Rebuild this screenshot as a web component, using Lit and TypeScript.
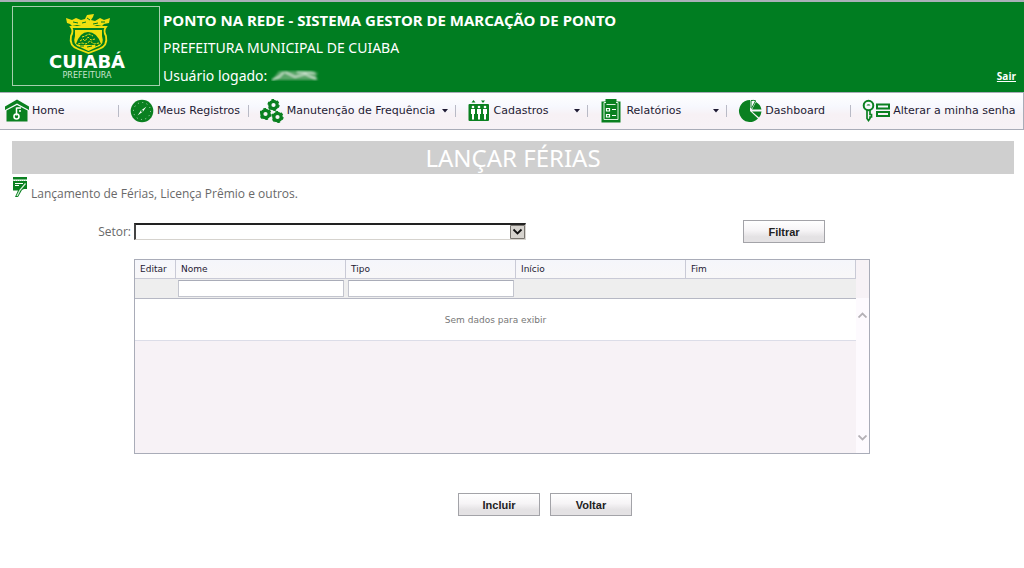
import { LitElement, html, svg, css } from "lit";
import { customElement, property } from "lit/decorators.js";

const icons: Record<string, unknown> = {
  home: svg`
    <path d="M0 7.500 12 0.500l12 7v3.500L12 4.500 0 11z" fill="#0a8020"/>
    <path d="M1.500 11.500 12 6l10.500 5.500V22.500h-21z" fill="#0a8020"/>
    <path d="M11.500 9h4.500M11.500 8.500v8M14 12h2" stroke="#fff" stroke-width="1.500" fill="none"/>
    <circle cx="11.500" cy="17.500" r="2.500" fill="none" stroke="#fff" stroke-width="1.600"/>`,
  clock: svg`
    <circle cx="12" cy="12" r="11.300" fill="#0a8020"/>
    <circle cx="12" cy="12" r="8.500" fill="none" stroke="#b8dfc0" stroke-width="1" stroke-dasharray="1 3.450"/>
    <path d="M7.500 16.500 11 11.500 16.500 7.500 13 12.500z" fill="#fff"/>
    <circle cx="12" cy="12" r="1" fill="#0a8020"/>`,
  gears: svg`
    <g fill="none" stroke="#0a8020" stroke-width="3.200">
      <circle cx="13.500" cy="6" r="3.700"/><circle cx="5.500" cy="15" r="3.700"/><circle cx="17.500" cy="18" r="3.700"/>
    </g>
    <g fill="none" stroke="#0a8020" stroke-width="1.400" stroke-dasharray="2.800 2.860">
      <circle cx="13.500" cy="6" r="5.400"/><circle cx="5.500" cy="15" r="5.400"/><circle cx="17.500" cy="18" r="5.400"/>
    </g>`,
  people: svg`
    <path d="M4.500 3.500 6.500 1l2 2.500zM14 1.500h4l-2 2.500z" fill="#0a8020"/>
    <rect x="1.500" y="5" width="20.500" height="17" rx="1" fill="#0a8020"/>
    <g fill="#fff">
      <circle cx="6" cy="8" r="1.300"/><circle cx="12" cy="8" r="1.300"/><circle cx="18" cy="8" r="1.300"/>
      <path d="M4 10h4v5h-1v5.500h-2V15H4zM10 10h4v5h-1v5.500h-2V15h-1zM16 10h4v5h-1v5.500h-2V15h-1z"/>
    </g>`,
  report: svg`
    <path d="M2.500 2.500h4V0h11v2.500h4V23.500h-19z" fill="#0a8020"/>
    <path d="M7 3.500H5v17h14v-17h-2M7.500 5.500h9" fill="none" stroke="#d9f0dd" stroke-width="1"/>
    <path d="M7.500 9.500h3v2.500h-3zM7.500 15.500h3V18h-3zM13 10.500h4M13 16.500h4" fill="none" stroke="#fff" stroke-width="1.200"/>`,
  pie: svg`
    <path d="M12 12V1a11 11 0 1 0 8 18.500z" fill="#0a8020"/>
    <path d="M14 10.500 18 3a11 11 0 0 1 5.500 7.500z" fill="#0a8020"/>
    <path d="M14 12.500h9.500a11 11 0 0 1-2.500 6z" fill="#0a8020"/>
    <path d="M13 9V1.500q3-.500 5 .500M13.500 9.500 17.500 2" fill="none" stroke="#0a8020"/>`,
  key: svg`
    <circle cx="6.500" cy="6.500" r="4.800" fill="none" stroke="#0a8020" stroke-width="2"/>
    <path d="M4.500 6.500a2.200 2.200 0 0 1 4 0z" fill="#0a8020"/>
    <path d="M5 11v8.500L6.500 21.500l1.500-2v-1.500h1.500v-2.500H8V11" fill="none" stroke="#0a8020" stroke-width="1.700"/>
    <path d="M15 5.500h12v4H15zM15 13h12v4H15z" fill="none" stroke="#0a8020" stroke-width="2"/>`,
};

interface Entry {
  label: string;
  icon: string;
  menu?: boolean;
}

const entries: Entry[] = [
  { label: "Home", icon: "home" },
  { label: "Meus Registros", icon: "clock" },
  { label: "Manutenção de Frequência", icon: "gears", menu: true },
  { label: "Cadastros", icon: "people", menu: true },
  { label: "Relatórios", icon: "report", menu: true },
  { label: "Dashboard", icon: "pie" },
  { label: "Alterar a minha senha", icon: "key" },
];

@customElement("site-header")
export class SiteHeader extends LitElement {
  static styles = css`
    :host { display: block; }
    .bar {
      display: flex;
      gap: 3px;
      padding: 4px 8px 2px 12px;
      border-top: 2px solid #a9b0b8;
      background: #007d21;
      color: #fff;
      font: 14px/28px "Noto Sans", "Open Sans", sans-serif;
    }
    .logo { box-sizing: border-box; width: 148px; height: 80px; border: 1px solid #a5cfae; }
    .titles { flex: 1; min-width: 0; }
    .titles h1, .titles p { margin: 0; font-size: 14px; line-height: 28px; }
    .titles h1 { font-size: 15px; }
    .user { display: flex; align-items: center; gap: 4px; }
    .exit {
      align-self: flex-end;
      margin-bottom: 6px;
      color: #fff;
      font: bold 10px/16px "Open Sans", sans-serif;
    }
  `;

  render() {
    return html`<header class="bar">
      <svg class="logo" viewBox="0 0 146 78" role="img" aria-label="Cuiabá Prefeitura">
        <g fill="#f0e010">
          <path d="M53 11l6 2 4-2 5 2 4-1 2-4 7-1-1 3-2 3 4 1 5-3 4 2 6-2-1 5-5 1-2 2-5-1-3 1H68l-4-1-5 1-2-2-3-1z"/>
        </g>
        <path d="M58 20h35q-3 4 0 9 2 10-7 13l-10.500 4L65 42q-9-3-7-13 3-5 0-9z" fill="none" stroke="#f0e010" stroke-width="1.800"/>
        <path d="M62 23h27v6q3 9-5 11l-8.500 4L67 40q-8-2-5-11z" fill="#f0e010"/>
        <path d="M60 15l5 1M69 16l4-1M80 17l5-1M88 15l4 0M74 11l3 2" stroke="#007d21" stroke-width="1"/>
        <path d="M63 37q4-12 12-12 9 0 13 12l-3 1H66z" fill="#007d21"/>
        <path d="M67 34l3-2 2 2 3-4 3 3 4-1M69 30l3-1 4-2 4 2M65 37l4-1 4 1 4-3 4 3 5-1" fill="none" stroke="#f0e010" stroke-width="1" stroke-dasharray="2.500 1"/>
        <path d="M67 39l4 0M74 40l5-1M82 39l3-1" stroke="#007d21" stroke-width="1"/>
        <text x="74" y="61" text-anchor="middle" fill="#fff" font-family="DejaVu Sans" font-size="18" font-weight="bold">CUIABÁ</text>
        <text x="74" y="71" text-anchor="middle" fill="#c8e4cd" font-family="DejaVu Sans" font-size="8">PREFEITURA</text>
      </svg>
      <div class="titles">
        <h1>PONTO NA REDE - SISTEMA GESTOR DE MARCAÇÃO DE PONTO</h1>
        <p>PREFEITURA MUNICIPAL DE CUIABA</p>
        <p class="user">Usuário logado:
          <svg width="50" height="16" viewBox="0 0 50 16" aria-hidden="true">
            <defs><filter id="soft"><feGaussianBlur stdDeviation="1 .800"/></filter></defs>
            <g filter="url(#soft)">
              <path d="M1 12 8 3h32l7 2-2 3 2 4H20z" fill="#5aa669"/>
              <path d="M1 12l7-3 5-5M14 4l10 5 10-3 11 5M26 4l18 1" fill="none" stroke="#d5e8d8" stroke-width="1.500"/>
            </g>
          </svg>
        </p>
      </div>
      <a class="exit" href="#sair">Sair</a>
    </header>`;
  }
}

@customElement("main-menu")
export class MainMenu extends LitElement {
  static styles = css`
    :host { display: block; }
    .menu {
      display: grid;
      grid-template-columns: 118fr 130fr 207fr 133fr 139fr 124fr 173fr;
      box-sizing: border-box;
      height: 38px;
      border: solid #a9acb8;
      border-width: 1px 1px 1px 0;
      background: linear-gradient(#fff, #f7f8fe 38%, #f7f1f5 60%, #f7f2f6);
    }
    .item {
      display: flex;
      align-items: center;
      gap: 3px;
      padding-left: 12px;
      color: #1e1a33;
      font: 11px/16px "DejaVu Sans", Verdana, sans-serif;
      text-decoration: none;
      white-space: nowrap;
      background: linear-gradient(#b9bac6, #b9bac6) left center / 1px 12px no-repeat;
    }
    .item:first-child { padding-left: 5px; background: none; }
    .arrow { margin: 0 7px 0 auto; }
  `;

  render() {
    return html`<nav class="menu">
      ${entries.map((e) => {
        const width = e.icon === "key" ? 28 : 24;
        return html`<a class="item" href="#${e.icon}">
          <svg width=${width} height="24" viewBox="0 0 ${width} 24" aria-hidden="true">${icons[e.icon]}</svg>
          <span>${e.label}</span>
          ${e.menu
            ? html`<svg class="arrow" width="6" height="4" viewBox="0 0 6 4" aria-hidden="true"><path d="M0 0h6L3 3.500z" fill="#1e1a33"/></svg>`
            : null}
        </a>`;
      })}
    </nav>`;
  }
}

@customElement("data-grid")
export class DataGrid extends LitElement {
  @property({ attribute: false }) columns = ["Nome", "Tipo", "Início", "Fim"];

  static styles = css`
    :host { display: block; }
    .frame {
      display: flex;
      box-sizing: border-box;
      height: 195px;
      border: 1px solid #a9acb8;
      background: #f7f2f6;
      font: 9px/12px "DejaVu Sans", Verdana, sans-serif;
    }
    .body { flex: 1; min-width: 0; }
    .table { width: 100%; border-collapse: separate; border-spacing: 0; table-layout: fixed; }
    .first { width: 41px; }
    .head th {
      box-sizing: border-box;
      height: 19px;
      padding: 0 5px;
      border: solid #c9cad6;
      border-width: 0 1px 1px 0;
      background: linear-gradient(#f5f6fb, #f8f7f8);
      color: #1e1a33;
      font-weight: normal;
      text-align: left;
    }
    .filter td {
      box-sizing: border-box;
      height: 20px;
      padding: 1px 2px;
      border-bottom: 1px solid #b6b8c4;
      background: #eee;
    }
    .field {
      display: block;
      box-sizing: border-box;
      width: 100%;
      height: 17px;
      padding: 0 3px;
      border: 1px solid #c3c5ce;
      border-top-color: #a9acb8;
      background: #fff;
      font: inherit;
    }
    .empty td {
      box-sizing: border-box;
      height: 42px;
      padding: 0;
      border-bottom: 1px solid #dcdde8;
      background: #fff;
      color: #777;
      text-align: center;
    }
    .scroll { display: flex; flex-direction: column; width: 13px; }
    .corner { height: 38px; }
    .track {
      display: flex;
      flex: 1;
      flex-direction: column;
      justify-content: space-between;
      align-items: center;
      padding: 14px 0 12px;
      background: #fdfafe;
    }
  `;

  render() {
    return html`<div class="frame">
      <div class="body">
        <table class="table">
          <thead>
            <tr class="head">
              <th class="first" scope="col">Editar</th>
              ${this.columns.map((c) => html`<th scope="col">${c}</th>`)}
            </tr>
          </thead>
          <tbody>
            <tr class="filter">
              <td></td>
              ${this.columns.map((c, i) => html`<td>${i < 2 ? html`<input class="field" type="text" aria-label=${c}>` : null}</td>`)}
            </tr>
            <tr class="empty"><td colspan="5">Sem dados para exibir</td></tr>
          </tbody>
        </table>
      </div>
      <div class="scroll" aria-hidden="true">
        <div class="corner"></div>
        <div class="track">
          <svg width="9" height="6" viewBox="0 0 9 6"><path d="M.500 5.500l4-4 4 4" fill="none" stroke="#b4b1b6" stroke-width="1.800"/></svg>
          <svg width="9" height="6" viewBox="0 0 9 6"><path d="M.500 .500l4 4 4-4" fill="none" stroke="#b4b1b6" stroke-width="1.800"/></svg>
        </div>
      </div>
    </div>`;
  }
}

@customElement("app-root")
export class AppRoot extends LitElement {
  static styles = css`
    :host {
      display: block;
      min-height: 100vh;
      background: #fff;
      color: #696969;
      font: 12px/20px "Open Sans", sans-serif;
    }
    .title {
      margin: 11px 10px 0 12px;
      background: #cfcfcf;
      color: #fff;
      font: 24px/33px "Noto Sans", sans-serif;
      text-align: center;
    }
    .note { display: flex; gap: 4px; margin: 2px 12px 0; }
    .note p { margin: 8px 0 0; }
    .search {
      display: grid;
      grid-template-columns: 134px 392px 1fr;
      align-items: center;
      margin: 16px 199px 0 0;
    }
    .search label { padding-right: 3px; text-align: right; }
    .picker { display: grid; align-items: center; }
    .picker select {
      grid-area: 1 / 1;
      width: 100%;
      height: 17px;
      margin: 0;
      padding: 0 18px 0 4px;
      appearance: none;
      border: solid #d6d3ce;
      border-color: #222 #d6d3ce #d6d3ce #444;
      border-width: 2px 1px 1px 2px;
      border-radius: 0;
      background: #fff;
      font: 11px/14px "Liberation Sans", sans-serif;
    }
    .picker svg { grid-area: 1 / 1; justify-self: end; pointer-events: none; }
    .button {
      width: 82px;
      height: 23px;
      padding: 0;
      border: 1px solid #a3a3a8;
      border-radius: 0;
      background: linear-gradient(#fff, #f6f4f6 45%, #e4e2e4 75%, #e4e2e4);
      color: #222;
      font: bold 11px/16px "Liberation Sans", sans-serif;
    }
    .search .button { justify-self: end; }
    .grid { margin: 16px 154px 0 134px; }
    .actions { display: flex; justify-content: center; gap: 10px; padding: 39px 0 0 66px; }
  `;

  render() {
    return html`
      <site-header></site-header>
      <main-menu></main-menu>
      <main>
        <h2 class="title">LANÇAR FÉRIAS</h2>
        <div class="note">
          <svg width="15" height="23" viewBox="0 0 15 23" aria-hidden="true">
            <path d="M1 1h14v2.500H1zM1 5h14v8h-3l-2 1-4 7H3l3-6.500H1z" fill="#0a8020"/>
            <path d="M3 7.500h8M3 9.500h4" stroke="#fff"/>
            <path d="M1 4h14" stroke="#7fc08c" stroke-dasharray="1 1"/>
            <path d="M13.500 7.500 8 14l-3 6" fill="none" stroke="#d9f0dd" stroke-width="1.200"/>
          </svg>
          <p>Lançamento de Férias, Licença Prêmio e outros.</p>
        </div>
        <form class="search">
          <label for="setor">Setor:</label>
          <div class="picker">
            <select id="setor"><option></option></select>
            <svg width="17" height="17" viewBox="0 0 17 17" aria-hidden="true">
              <path d="M1.500 2.500h14v13h-14z" fill="#d6d3ce" stroke="#77746f"/>
              <path d="M4.500 6.500l4 4 4-4" fill="none" stroke="#111" stroke-width="1.800"/>
            </svg>
          </div>
          <button class="button" type="button">Filtrar</button>
        </form>
        <data-grid class="grid"></data-grid>
        <div class="actions">
          <button class="button" type="button">Incluir</button>
          <button class="button" type="button">Voltar</button>
        </div>
      </main>
    `;
  }
}
